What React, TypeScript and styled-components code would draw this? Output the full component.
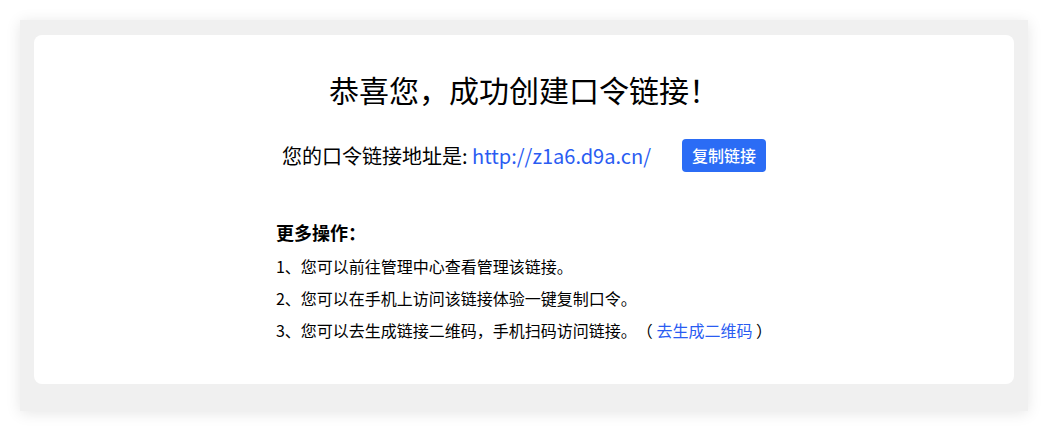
import React from "react";
import styled, { createGlobalStyle } from "styled-components";

const GlobalStyle = createGlobalStyle`
  html, body {
    margin: 0;
    padding: 0;
    background: #ffffff;
  }
  body {
    font-family: "Noto Sans CJK SC", "Noto Sans", sans-serif;
    color: #000;
    text-spacing-trim: space-all;
  }
`;

const Page = styled.div`
  padding: 20px 21px 20px 20px;
`;

const Frame = styled.div`
  background: #f0f0f0;
  padding: 15px 14px 27px 14px;
  box-shadow: 0 2px 14px rgba(0, 0, 0, 0.1);
`;

const Card = styled.div`
  background: #ffffff;
  border-radius: 8px;
  padding: 34px 0 38px;
  display: flex;
  flex-direction: column;
  align-items: center;
`;

const Title = styled.h1`
  margin: 0;
  font-size: 30px;
  line-height: 40px;
  font-weight: 400;
  color: #000;
`;

const LinkRow = styled.div`
  margin-top: 29px;
  display: flex;
  align-items: center;
  height: 34px;
  font-size: 20px;
  color: #000;
`;

const Label = styled.span`
  white-space: pre;
`;

const UrlLink = styled.a`
  color: #2a5cf2;
  text-decoration: none;
  margin-right: 31px;
`;

const CopyButton = styled.button`
  height: 33px;
  padding: 0 10px;
  border: none;
  border-radius: 4px;
  background: #2b6cf5;
  color: #fff;
  font-family: inherit;
  font-size: 16px;
  font-weight: 500;
  cursor: pointer;
`;

const More = styled.div`
  margin-top: 48px;
  align-self: center;
  width: fit-content;
`;

const MoreHeading = styled.div`
  font-size: 18px;
  line-height: 24px;
  font-weight: 700;
  color: #000;
  margin-bottom: 6px;
`;

const Item = styled.div`
  font-size: 16px;
  line-height: 32px;
  color: #000;
  white-space: pre;
`;

const InlineLink = styled.a`
  color: #2a5cf2;
  text-decoration: none;
`;

export default function App() {
  return (
    <>
      <GlobalStyle />
      <Page>
        <Frame>
          <Card>
            <Title>恭喜您，成功创建口令链接！</Title>
            <LinkRow>
              <Label>您的口令链接地址是: </Label>
              <UrlLink href="#">http://z1a6.d9a.cn/</UrlLink>
              <CopyButton>复制链接</CopyButton>
            </LinkRow>
            <More>
              <MoreHeading>更多操作：</MoreHeading>
              <Item>1、您可以前往管理中心查看管理该链接。</Item>
              <Item>2、您可以在手机上访问该链接体验一键复制口令。</Item>
              <Item>
                {"3、您可以去生成链接二维码，手机扫码访问链接。（ "}
                <InlineLink href="#">去生成二维码</InlineLink>
                {" ）"}
              </Item>
            </More>
          </Card>
        </Frame>
      </Page>
    </>
  );
}
